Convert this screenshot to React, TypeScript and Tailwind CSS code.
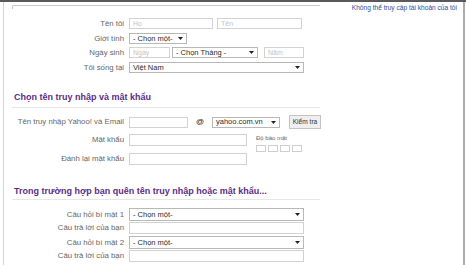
import React from "react";

const Arrow = () => (
  <svg width="5" height="3" viewBox="0 0 5 3" className="shrink-0">
    <path d="M0 0 L5 0 L2.5 3 Z" fill="#222" />
  </svg>
);

const Input = ({ w, h = "h-[11px]", ph }: { w: string; h?: string; ph?: string }) => (
  <div className={`${w} ${h} border border-[#d2d2d2] bg-white flex items-center px-[3px] text-[7px] text-[#c4c4c4] leading-none`}>
    {ph}
  </div>
);

const Select = ({ w, h = "h-[11px]", text }: { w: string; h?: string; text: string }) => (
  <div className={`${w} ${h} border border-[#b8b8b8] bg-white flex items-center justify-between pl-[3px] pr-[3px] text-[7.5px] text-[#2a2a2a] leading-none whitespace-nowrap`}>
    <span>{text}</span>
    <Arrow />
  </div>
);

const Label = ({ children }: { children: React.ReactNode }) => (
  <div className="w-[120px] text-right text-[7.8px] text-[#666] leading-none shrink-0 whitespace-nowrap">{children}</div>
);

export default function App() {
  return (
    <div
      className="w-[466px] h-[265px] bg-white overflow-hidden border-t-2 border-t-[#5a5a5a]"
      style={{ fontFamily: '"Liberation Sans", Arial, sans-serif' }}
    >
      <div className="ml-[3px] w-[462px] h-full border-l border-l-[#d4d4d4] border-r-2 border-r-[#ababab]">
        {/* top */}
        <div className="flex items-start h-[14px]">
          <div className="ml-[8px] mt-[3px] w-[308px] h-[4px] border-t border-l border-[#c8c8c8] rounded-tl-[2px]" />
          <div className="ml-auto mr-[6px] mt-[3px] text-[6.6px] text-[#2d4f9c] leading-none whitespace-nowrap">
            Không thể truy cập tài khoản của tôi
          </div>
        </div>

        {/* personal info */}
        <div className="flex items-center gap-[5px] mt-[2px]">
          <Label>Tên tôi</Label>
          <div className="flex gap-[4px]">
            <Input w="w-[84px]" ph="Họ" />
            <Input w="w-[85px]" ph="Tên" />
          </div>
        </div>
        <div className="flex items-center gap-[5px] mt-[4px]">
          <Label>Giới tính</Label>
          <Select w="w-[58px]" text="- Chọn một-" />
        </div>
        <div className="flex items-center gap-[5px] mt-[3px]">
          <Label>Ngày sinh</Label>
          <div className="flex gap-[2px]">
            <Input w="w-[41px]" ph="Ngày" />
            <Select w="w-[86px]" text="- Chọn Tháng -" />
            <div className="w-[2px]" />
            <Input w="w-[40px]" ph="Năm" />
          </div>
        </div>
        <div className="flex items-center gap-[5px] mt-[4px]">
          <Label>Tôi sống tại</Label>
          <Select w="w-[175px]" text="Việt Nam" />
        </div>

        {/* section 1 */}
        <div className="mt-[19px] ml-[8px] w-[308px] pl-[2px] pb-[5px] border-b border-[#e6e6e6] text-[9px] font-bold text-[#5b2d86] leading-[10px]">
          Chọn tên truy nhập và mật khẩu
        </div>
        <div className="flex items-center gap-[5px] mt-[7px] h-[14px]">
          <Label>Tên truy nhập Yahoo! và Email</Label>
          <Input w="w-[59px]" />
          <div className="w-[14px] text-center text-[8px] text-[#222] leading-none">@</div>
          <Select w="w-[68px]" text="yahoo.com.vn" />
          <div className="ml-[4px] w-[32px] h-[14px] border border-[#c4c4c4] bg-[#efefef] flex items-center justify-center text-[6.6px] text-[#333] leading-none whitespace-nowrap">
            Kiểm tra
          </div>
        </div>
        <div className="flex items-start gap-[5px] mt-[5px]">
          <div className="h-[12px] flex items-center">
            <Label>Mật khẩu</Label>
          </div>
          <Input w="w-[118px]" h="h-[12px]" />
          <div className="ml-[4px] mt-[1px] flex flex-col">
            <div className="text-[6px] text-[#666] leading-none whitespace-nowrap">Độ bảo mật</div>
            <div className="flex gap-[2px] mt-[4px]">
              <div className="w-[10px] h-[7px] border border-[#cfcfcf]" />
              <div className="w-[10px] h-[7px] border border-[#cfcfcf]" />
              <div className="w-[10px] h-[7px] border border-[#cfcfcf]" />
              <div className="w-[10px] h-[7px] border border-[#cfcfcf]" />
            </div>
          </div>
        </div>
        <div className="flex items-center gap-[5px] mt-[1px]">
          <Label>Đánh lại mật khẩu</Label>
          <Input w="w-[118px]" h="h-[12px]" />
        </div>

        {/* section 2 */}
        <div className="mt-[21px] ml-[8px] w-[308px] pl-[2px] pb-[3px] border-b border-[#e6e6e6] text-[9px] font-bold text-[#5b2d86] leading-[10px] whitespace-nowrap">
          Trong trường hợp bạn quên tên truy nhập hoặc mật khẩu...
        </div>
        <div className="flex items-center gap-[5px] mt-[8px]">
          <Label>Câu hỏi bí mật 1</Label>
          <Select w="w-[175px]" h="h-[13px]" text="- Chọn một-" />
        </div>
        <div className="flex items-center gap-[5px] mt-[1px]">
          <Label>Câu trả lời của bạn</Label>
          <Input w="w-[175px]" h="h-[12px]" />
        </div>
        <div className="flex items-center gap-[5px] mt-[2px]">
          <Label>Câu hỏi bí mật 2</Label>
          <Select w="w-[175px]" h="h-[13px]" text="- Chọn một-" />
        </div>
        <div className="flex items-center gap-[5px] mt-[1px]">
          <Label>Câu trả lời của bạn</Label>
          <Input w="w-[175px]" h="h-[12px]" />
        </div>
      </div>
    </div>
  );
}
